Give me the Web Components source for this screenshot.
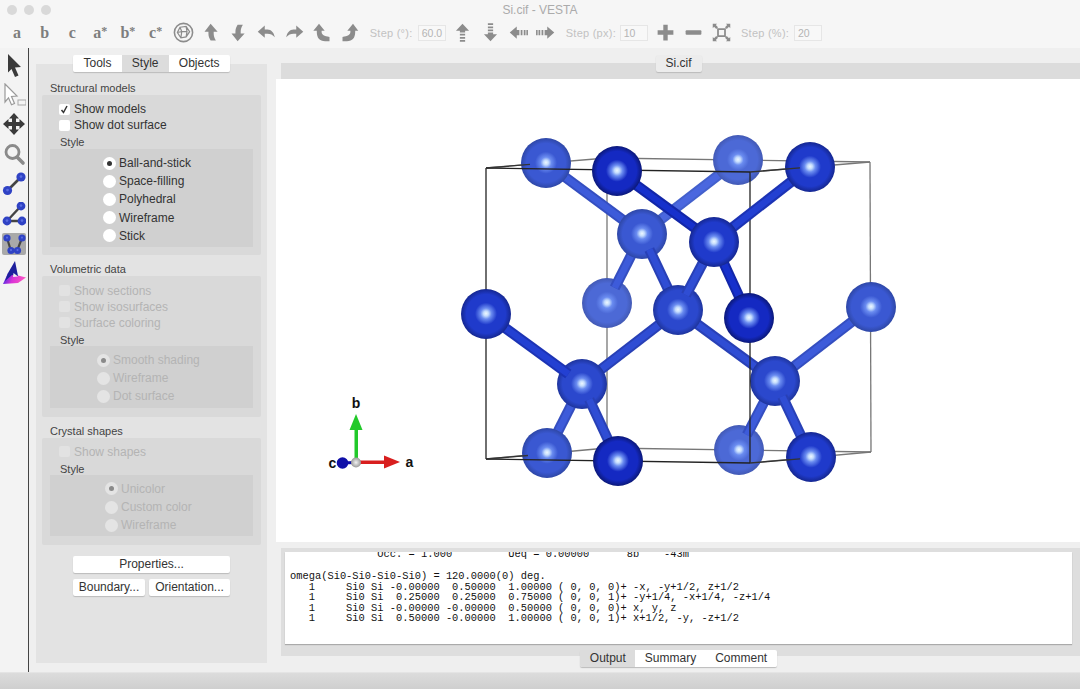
<!DOCTYPE html>
<html>
<head>
<meta charset="utf-8">
<title>Si.cif - VESTA</title>
<style>
  html, body { margin: 0; height: 689px; overflow: hidden; background: #efefef; font-family: "Liberation Sans", Arial, sans-serif; }
</style>
</head>
<body>
<vesta-app>
  <vesta-toolbar slot="top" title-text="Si.cif - VESTA"></vesta-toolbar>
  <vesta-toolstrip slot="strip"></vesta-toolstrip>

  <vesta-sidepanel slot="side">
    <vesta-tabs selected="1"><span>Tools</span><span>Style</span><span>Objects</span></vesta-tabs>

    <vesta-group label="Structural models" style="--pad:6px 8px 8px;--gap:9px;--st:16px">
      <vesta-check checked>Show models</vesta-check>
      <vesta-check>Show dot surface</vesta-check>
      <vesta-substyle style="--indent:53px">
        <vesta-radio checked>Ball-and-stick</vesta-radio>
        <vesta-radio>Space-filling</vesta-radio>
        <vesta-radio>Polyhedral</vesta-radio>
        <vesta-radio>Wireframe</vesta-radio>
        <vesta-radio>Stick</vesta-radio>
      </vesta-substyle>
    </vesta-group>

    <vesta-group label="Volumetric data" style="--pad:7px 8px 9.400px">
      <vesta-check disabled>Show sections</vesta-check>
      <vesta-check disabled>Show isosurfaces</vesta-check>
      <vesta-check disabled>Surface coloring</vesta-check>
      <vesta-substyle style="--indent:47px">
        <vesta-radio checked disabled>Smooth shading</vesta-radio>
        <vesta-radio disabled>Wireframe</vesta-radio>
        <vesta-radio disabled>Dot surface</vesta-radio>
      </vesta-substyle>
    </vesta-group>

    <vesta-group label="Crystal shapes" style="--pad:6px 8px 8.400px">
      <vesta-check disabled>Show shapes</vesta-check>
      <vesta-substyle style="--indent:55px">
        <vesta-radio checked disabled>Unicolor</vesta-radio>
        <vesta-radio disabled>Custom color</vesta-radio>
        <vesta-radio disabled>Wireframe</vesta-radio>
      </vesta-substyle>
    </vesta-group>

    <vesta-actions>
      <vesta-button style="grid-column: 1 / 3">Properties...</vesta-button>
      <vesta-button>Boundary...</vesta-button>
      <vesta-button>Orientation...</vesta-button>
    </vesta-actions>
  </vesta-sidepanel>

  <vesta-docstrip slot="main"><vesta-button>Si.cif</vesta-button></vesta-docstrip>
  <crystal-view slot="main"></crystal-view>
  <output-log slot="main">
    <vesta-tabs slot="tabs" selected="0"><span>Output</span><span>Summary</span><span>Comment</span></vesta-tabs>
  </output-log>
</vesta-app>

<script>
// little helper so every element below reads the same
function shadow(el, html) {
  el.attachShadow({ mode: 'open' });
  el.shadowRoot.innerHTML = html;
}

// balls of the measuring tools in the left strip
const iconBall = (x, y, r) => `<circle cx="${x}" cy="${y}" r="${r}" fill="#2f42c4"/><circle cx="${x}" cy="${y - .4}" r="${r * .3}" fill="#5a6ce0"/>`;

// icons of the top toolbar and the left strip, on a 24 box
const ICONS = {
  poly: '<g fill="none" stroke="currentColor"><circle cx="12" cy="12" r="10.400" stroke-width="1.800"/><path stroke-width="1.400" d="M8 6l7-1 4 6-4 6-6 1-4-6zM8 6l2 5-5 1M10 11l6 0M15 5l1 6-1 6M10 11l-1 7"/></g>',
  up: '<path fill="currentColor" d="M11 2l8 9h-4.500v2c0 3 .8 5 2.500 8h-6c-1.600-2.500-2.500-5-2.500-8v-2H4z"/>',
  down: '<path fill="currentColor" d="M11 22l8-9h-4.500v-2c0-3 .8-5 2.500-8h-6C9.400 5.500 8.500 8 8.500 11v2H4z"/>',
  left: '<path fill="currentColor" d="M2 11l8-7v4.500h3c4.500 0 7.500 3.500 8.500 9-2.500-2.700-5-4-8.500-4h-3V18z"/>',
  right: '<path fill="currentColor" d="M22 11l-8-7v4.500h-3c-4.500 0-7.500 3.500-8.500 9 2.500-2.700 5-4 8.500-4h3V18z"/>',
  turnl: '<path fill="currentColor" d="M8 2l6.500 8H11v1.500c0 3 3 5 9 5.500v5h-5c-6.500 0-9.500-4-9.500-10.500V10H1.500z"/>',
  turnr: '<path fill="currentColor" d="M16 2L9.500 10H13v1.500c0 3-3 5-9 5.500v5h5c6.500 0 9.500-4 9.500-10.500V10h3.500z"/>',
  stepup: '<path fill="currentColor" d="M12 2l7.500 8H15v2H9v-2H4.500zM9 13.500h6V15.500H9zM9 17h6v2H9zM9 20.500h6v2H9z"/>',
  stepdown: '<path fill="currentColor" d="M12 22l7.500-8H15v-2H9v2H4.500zM9 10.500h6V8.500H9zM9 7h6V5H9zM9 3.500h6v-2H9z"/>',
  stepleft: '<path fill="currentColor" d="M2 12l8-7v4h3v6h-3v4zM14.500 9h2v6h-2zM18 9h2v6h-2zM21 9h1.800v6H21z"/>',
  stepright: '<path fill="currentColor" d="M22 12l-8-7v4h-3v6h3v4zM9.500 9h-2v6h2zM6 9H4v6h2zM3 9H1.200v6H3z"/>',
  plus: '<path fill="currentColor" d="M9.500 3h5v6.500H21v5h-6.500V21h-5v-6.500H3v-5h6.500z"/>',
  minus: '<rect fill="currentColor" x="3" y="9.500" width="18" height="5" rx="1"/>',
  fit: '<g fill="currentColor"><path d="M7 7h10v10H7zM9 9v6h6V9z" fill-rule="evenodd"/><path d="M2 2h5L5.500 3.500 8 6 6 8 3.500 5.500 2 7zM22 2v5l-1.500-1.500L18 8l-2-2 2.500-2.500L17 2zM2 22v-5l1.500 1.500L6 16l2 2-2.500 2.500L7 22zM22 22h-5l1.500-1.500L16 18l2-2 2.500 2.500L22 17z"/></g>',
  arrow: '<path fill="#3a3a3a" d="M6 1l13 13-6 .5 3.500 8-3.500 1.500-3.500-8L6 19.500z"/>',
  select: '<path fill="#fff" stroke="#9a9a9a" stroke-width="1.200" d="M3 1l12 12-5.500.5 3 7-3 1.300-3-7L3 19z"/><rect x="16" y="17" width="8" height="5" fill="#f4f4f4" stroke="#a8a8a8"/>',
  move: '<path fill="#3a3a3a" d="M12 1l5 5.500h-3v3.500h3.500V7l5.500 5-5.500 5v-3H14v3.500h3L12 23l-5-5.500h3V14H6.500v3L1 12l5.500-5v3H10V6.500H7z"/>',
  zoom: '<g fill="none" stroke="#8a8a8a"><circle cx="10.500" cy="10" r="6.500" stroke-width="2.800"/><path stroke-width="3.600" stroke-linecap="round" d="M15.500 15.500l5.500 5.500"/></g>',
  bond: '<path stroke="#444" stroke-width="2.600" d="M6 18L18 6"/>' + iconBall(5.5, 18.5, 4.6) + iconBall(19, 5, 4.6),
  angle: '<path fill="none" stroke="#444" stroke-width="2.400" d="M19 4L5 19h15"/>' + iconBall(19, 4, 4.4) + iconBall(5, 19, 4.4) + iconBall(20, 19, 4.4),
  dihedral: '<rect x="0" y="1" width="24" height="22" rx="2" fill="#a9a9a9"/><path fill="none" stroke="#444" stroke-width="2.200" d="M5 6l4 13h6l5-13"/>' + iconBall(5, 6, 3.6) + iconBall(9, 18.500, 3.6) + iconBall(15.500, 18.500, 3.6) + iconBall(20, 6, 3.6),
  surface: '<defs><linearGradient id="sf" x1="0" x2="1" y1=".3" y2=".5"><stop offset="0" stop-color="#3a2ae0"/><stop offset=".45" stop-color="#d832d8"/><stop offset="1" stop-color="#ff58c0"/></linearGradient></defs><path fill="url(#sf)" d="M1 23l5-11 18 4.500-8 5.500z"/><path fill="#1d1f9c" d="M13 0L6 12 3 20l7-6 6 1z"/><path fill="#eee" d="M11.500 12l4.500 3.500-5 .5z"/>'
};

class VestaIcon extends HTMLElement {
  connectedCallback() {
    const size = this.getAttribute('size') || 21;
    const w = this.getAttribute('box') || '27.75px';
    shadow(this, `
      <style>
        :host { display: flex; align-items: center; justify-content: center; flex: none; width: ${w}; height: 100%; color: #8c8c8c; }
        svg { display: block; }
      </style>
      <svg width="${size}" height="${size}" viewBox="0 0 24 24">${ICONS[this.getAttribute('name')]}</svg>`);
  }
}
customElements.define('vesta-icon', VestaIcon);

class VestaApp extends HTMLElement {
  constructor() {
    super();
    shadow(this, `
      <style>
        :host { display: grid; grid-template-columns: 29px 1fr; grid-template-rows: 48px 624px 17px; width: 1080px; height: 689px; }
        .top { grid-column: 1 / 3; }
        .body { display: grid; grid-template-columns: 240px 1fr; min-width: 0; background: #efefef; }
        .main { display: flex; flex-direction: column; padding-left: 7px; min-width: 0; }
        .foot { grid-column: 1 / 3; border-top: 1px solid #e4e4e4; background: linear-gradient(#dcdcdc, #cfcfcf); box-sizing: border-box; }
      </style>
      <div class="top"><slot name="top"></slot></div>
      <slot name="strip"></slot>
      <div class="body">
        <slot name="side"></slot>
        <div class="main"><slot name="main"></slot></div>
      </div>
      <div class="foot"></div>`);
  }
}
customElements.define('vesta-app', VestaApp);

class VestaToolbar extends HTMLElement {
  connectedCallback() {
    const letters = [['a', ''], ['b', ''], ['c', ''], ['a', '*'], ['b', '*'], ['c', '*']];
    const icons = names => names.map(n => `<vesta-icon name="${n}"></vesta-icon>`).join('');
    shadow(this, `
      <style>
        :host { display: block; height: 48px; background: #f6f6f6; color: #bdbdbd; font: 11px "Liberation Sans", Arial, sans-serif; }
        .title { position: relative; height: 20px; line-height: 20px; text-align: center; font-size: 12px; color: #ababab; }
        .lights { position: absolute; left: 7px; top: 5px; display: flex; gap: 7px; }
        .lights i { width: 10px; height: 10px; border-radius: 50%; background: #d9d9d9; }
        .row { display: flex; align-items: center; height: 25px; padding-left: 3px; }
        .ltr { flex: none; width: 27.75px; text-align: center; font: bold 16px "Liberation Serif", "Times New Roman", serif; color: #7e7e7e; }
        .ltr sup { font-size: 12px; line-height: 0; vertical-align: 3px; }
        .lbl { flex: none; color: #c2c2c2; letter-spacing: .25px; }
        .inp { flex: none; box-sizing: border-box; width: 28px; height: 16px; line-height: 14px; border: 1px solid #e6e6e6; background: #f8f8f8; color: #b4b4b4; padding-left: 3px; font-size: 10.5px; }
      </style>
      <div class="title"><div class="lights"><i></i><i></i><i></i></div>${this.getAttribute('title-text')}</div>
      <div class="row">
        ${letters.map(([l, s]) => `<span class="ltr">${l}${s ? `<sup>${s}</sup>` : ''}</span>`).join('')}
        ${icons(['poly', 'up', 'down', 'left', 'right', 'turnl', 'turnr'])}
        <span class="lbl" style="margin-left:6px;width:48px">Step (°):</span>
        <span class="inp">60.0</span>
        <span style="width:3px"></span>
        ${icons(['stepup', 'stepdown', 'stepleft', 'stepright'])}
        <span class="lbl" style="margin-left:6px;width:54px">Step (px):</span>
        <span class="inp">10</span>
        <span style="width:4px"></span>
        ${icons(['plus', 'minus', 'fit'])}
        <span class="lbl" style="margin-left:6px;width:53px">Step (%):</span>
        <span class="inp">20</span>
      </div>`);
  }
}
customElements.define('vesta-toolbar', VestaToolbar);

class VestaToolstrip extends HTMLElement {
  connectedCallback() {
    const names = ['arrow', 'select', 'move', 'zoom', 'bond', 'angle', 'dihedral', 'surface'];
    shadow(this, `
      <style>
        :host { display: flex; flex-direction: column; box-sizing: border-box; width: 29px; height: 624px; padding-top: 2px; background: #f3f3f3; border-right: 1px solid #444; }
        div { height: 29.800px; flex: none; }
      </style>
      ${names.map(n => `<div><vesta-icon name="${n}" size="24" box="28px"></vesta-icon></div>`).join('')}`);
  }
}
customElements.define('vesta-toolstrip', VestaToolstrip);

class VestaSidepanel extends HTMLElement {
  constructor() {
    super();
    shadow(this, `
      <style>
        :host { display: flex; flex-direction: column; box-sizing: border-box; width: 231px; height: 599px; margin: 16px 0 0 7px; padding: 0 6px; background: #e3e3e3; }
      </style>
      <slot></slot>`);
  }
}
customElements.define('vesta-sidepanel', VestaSidepanel);

class VestaTabs extends HTMLElement {
  connectedCallback() {
    const sel = Number(this.getAttribute('selected'));
    [...this.children].forEach((c, i) => c.setAttribute('style',
      `padding:0 ${this.closest('output-log') ? 9.5 : 10.17}px;line-height:17px;background:${i === sel ? '#dcdcdc' : '#fff'};`));
    shadow(this, `
      <style>
        :host { display: flex; align-self: center; margin: -9px 0 0; height: 17px; border-radius: 2px; overflow: hidden; box-shadow: 0 1px 1px #bbb; font: 12px "Liberation Sans", Arial, sans-serif; color: #333; white-space: nowrap; }
      </style>
      <slot></slot>`);
  }
}
customElements.define('vesta-tabs', VestaTabs);

class VestaGroup extends HTMLElement {
  connectedCallback() {
    shadow(this, `
      <style>
        :host { display: block; margin-top: var(--gap, 7px); font: 12px "Liberation Sans", Arial, sans-serif; color: #333; }
        .t { height: 14px; line-height: 14px; padding-left: 8px; font-size: 11px; color: #444; }
        .b { background: #d9d9d9; padding: var(--pad); border-radius: 2px; }
      </style>
      <div class="t">${this.getAttribute('label')}</div>
      <div class="b"><slot></slot></div>`);
  }
}
customElements.define('vesta-group', VestaGroup);

class VestaSubstyle extends HTMLElement {
  constructor() {
    super();
    shadow(this, `
      <style>
        :host { display: block; }
        .t { height: var(--st, 15px); line-height: 18px; padding-left: 10px; font-size: 11px; color: #444; }
        .b { background: #d0d0d0; padding: 5px 0 2px var(--indent); }
      </style>
      <div class="t">Style</div>
      <div class="b"><slot></slot></div>`);
  }
}
customElements.define('vesta-substyle', VestaSubstyle);

class VestaCheck extends HTMLElement {
  connectedCallback() {
    const on = this.hasAttribute('checked');
    const off = this.hasAttribute('disabled');
    shadow(this, `
      <style>
        :host { display: flex; align-items: center; height: 16px; padding-left: 9px; color: ${off ? '#b4b4b4' : '#333'}; white-space: nowrap; }
        .box { flex: none; width: 11px; height: 11px; margin-right: 4px; background: ${off ? '#e2e2e2' : '#fff'}; border-radius: 2px; display: flex; }
      </style>
      <span class="box">${on ? '<svg width="11" height="11" viewBox="0 0 11 11"><path d="M2.500 6l2 2.500L8 2" fill="none" stroke="#333" stroke-width="1.500"/></svg>' : ''}</span>
      <slot></slot>`);
  }
}
customElements.define('vesta-check', VestaCheck);

class VestaRadio extends HTMLElement {
  connectedCallback() {
    const on = this.hasAttribute('checked');
    const off = this.hasAttribute('disabled');
    shadow(this, `
      <style>
        :host { display: flex; align-items: center; height: 18.200px; color: ${off ? '#b4b4b4' : '#333'}; white-space: nowrap; }
        .dot { flex: none; width: 13px; height: 13px; margin-right: 3px; border-radius: 50%; background: ${off ? '#e4e4e4' : '#fff'}; display: flex; align-items: center; justify-content: center; }
        .dot i { width: 5px; height: 5px; border-radius: 50%; background: ${off ? '#8a8a8a' : '#333'}; }
      </style>
      <span class="dot">${on ? '<i></i>' : ''}</span>
      <slot></slot>`);
  }
}
customElements.define('vesta-radio', VestaRadio);

class VestaButton extends HTMLElement {
  constructor() {
    super();
    shadow(this, `
      <style>
        :host { display: block; height: 17px; line-height: 17px; text-align: center; background: #fff; border-radius: 2px; box-shadow: 0 1px 1px #bbb; color: #333; font: 12px/17px "Liberation Sans", Arial, sans-serif; white-space: nowrap; }
      </style>
      <slot></slot>`);
  }
}
customElements.define('vesta-button', VestaButton);

class VestaActions extends HTMLElement {
  constructor() {
    super();
    shadow(this, `
      <style>
        :host { display: grid; grid-template-columns: 72px 81px; gap: 6px 4px; justify-content: center; margin-top: 11px; }
      </style>
      <slot></slot>`);
  }
}
customElements.define('vesta-actions', VestaActions);

class VestaDocstrip extends HTMLElement {
  constructor() {
    super();
    shadow(this, `
      <style>
        :host { display: flex; justify-content: center; box-sizing: border-box; height: 16px; margin: 15px 0 0 5px; background: #dcdcdc; }
        div { width: 46px; margin: -8px 0 0 -4px; }
        ::slotted(vesta-button) { background: #ececec; }
      </style>
      <div><slot></slot></div>`);
  }
}
customElements.define('vesta-docstrip', VestaDocstrip);

class CrystalView extends HTMLElement {
  connectedCallback() {
    // depth 4 is farthest, 0 is nearest; coordinates are the ones of the window
    const tones = [
      { base: '#1429c2', edge: '#0b1878', bond: '#1630cc', side: '#1226a8' },
      { base: '#1f3acb', edge: '#152790', bond: '#2340d2', side: '#1c33b4' },
      { base: '#2b48cd', edge: '#1e349c', bond: '#2f4dd4', side: '#2840b6' },
      { base: '#3a58d2', edge: '#2e47a6', bond: '#3d5bda', side: '#344ec0' },
      { base: '#4c69d6', edge: '#4259b4', bond: '#4a67df', side: '#4360cc' }
    ];
    const balls = [
      [738, 160, 4], [607, 303, 4], [739, 450, 4],
      [546, 163, 3], [642, 234, 3], [871, 307, 3], [547, 453, 3],
      [678, 310, 2], [582, 384, 2], [775, 381, 2],
      [810, 167, 1], [714, 242, 1], [486, 314, 1], [811, 457, 1],
      [617, 171, 0], [749, 318, 0], [618, 461, 0]
    ];
    // x1, y1, x2, y2, when it is drawn, and the tone when that is darker
    const bonds = [
      [738, 160, 642, 234, 4],
      [546, 163, 642, 234, 3], [642, 234, 607, 303, 3], [871, 307, 775, 381, 3], [775, 381, 739, 450, 3], [582, 384, 547, 453, 3],
      [642, 234, 678, 310, 2], [678, 310, 582, 384, 2], [678, 310, 775, 381, 2],
      [617, 171, 714, 242, 1, 0], [810, 167, 714, 242, 1], [714, 242, 678, 310, 1, 2], [714, 242, 749, 318, 1, 0],
      [486, 314, 582, 384, 1], [582, 384, 618, 461, 1, 2], [775, 381, 811, 457, 1, 2]
    ];
    const line = (x1, y1, x2, y2, c) => `<line x1="${x1}" y1="${y1}" x2="${x2}" y2="${y2}" stroke="${c}" stroke-width="1.300"/>`;
    // stop a bond inside the ball, so it only shows a short stub on the far one
    const bondLine = ([x1, y1, x2, y2, d, tone]) => {
      const t = tones[tone === undefined ? d : tone];
      const len = Math.hypot(x2 - x1, y2 - y1);
      const ux = (x2 - x1) / len * 17, uy = (y2 - y1) / len * 17;
      const ends = `x1="${(x1 + ux).toFixed(1)}" y1="${(y1 + uy).toFixed(1)}" x2="${(x2 - ux).toFixed(1)}" y2="${(y2 - uy).toFixed(1)}"`;
      return `<line ${ends} stroke="${t.side}" stroke-width="10.500"/><line ${ends} stroke="${t.bond}" stroke-width="6.500"/>`;
    };
    const grads = tones.map((t, i) => `
      <radialGradient id="s${i}" cx=".5" cy=".5" r=".5" fx=".5" fy=".49">
        <stop offset="0" stop-color="#eef8ff"/>
        <stop offset=".1" stop-color="#c4dcfd"/>
        <stop offset=".22" stop-color="#6a8cf0"/>
        <stop offset=".44" stop-color="${t.base}"/>
        <stop offset=".78" stop-color="${t.base}"/>
        <stop offset="1" stop-color="${t.edge}"/>
      </radialGradient>`).join('');

    let art = '';
    // far side of the cell
    art += line(607, 158, 870, 162, '#777') + line(607, 448, 871, 452, '#777')
      + line(607, 158, 607, 448, '#777') + line(870, 162, 871, 452, '#777')
      + line(486, 168, 607, 158, '#777') + line(750, 172, 870, 162, '#777')
      + line(486, 459, 607, 448, '#777') + line(750, 463, 871, 452, '#777');
    for (let d = 4; d >= 0; d--) {
      if (d === 1) {
        // near side of the cell goes here
        art += line(486, 168, 750, 172, '#222') + line(486, 459, 750, 463, '#222')
          + line(486, 168, 486, 459, '#222') + line(750, 172, 750, 463, '#222');
      }
      art += bonds.filter(b => b[4] === d).map(bondLine).join('');
      art += balls.filter(b => b[2] === d).map(b =>
        `<circle cx="${b[0]}" cy="${b[1]}" r="25" fill="url(#s${d})"/>`).join('');
    }
    art += line(486, 168, 530, 164.400, '#333') + line(750, 172, 800, 167.800, '#333')
      + line(486, 459, 528, 455.500, '#333') + line(750, 463, 800, 458.800, '#333');

    shadow(this, `
      <style>
        :host { display: block; height: 463px; background: #fff; }
        svg { display: block; }
        text { font: bold 14px "Liberation Sans", Arial, sans-serif; fill: #111; text-anchor: middle; }
      </style>
      <svg width="804" height="463" viewBox="276 79 804 463">
        <defs>${grads}
          <radialGradient id="org"><stop offset="0" stop-color="#f2f2f2"/><stop offset="1" stop-color="#9a9a9a"/></radialGradient>
        </defs>
        ${art}
        <rect x="354.500" y="428" width="3.500" height="34" fill="#22c92a"/>
        <path d="M356 414l6.500 16h-13z" fill="#22c92a"/>
        <rect x="356" y="460.500" width="28" height="3.500" fill="#d81e1e"/>
        <path d="M400 462l-16 6.500v-13z" fill="#d81e1e"/>
        <line x1="342" y1="463" x2="355" y2="462.500" stroke="#1010a8" stroke-width="3"/>
        <circle cx="342.500" cy="463" r="5.800" fill="#0f0fa8"/>
        <circle cx="356" cy="462.500" r="5" fill="url(#org)"/>
        <text x="356" y="408">b</text>
        <text x="332.500" y="468">c</text>
        <text x="409.500" y="467">a</text>
      </svg>`);
  }
}
customElements.define('crystal-view', CrystalView);

class OutputLog extends HTMLElement {
  connectedCallback() {
    // the log is scrolled, so its first line is cut by the top of the paper
    const first = '              Occ. = 1.000         Ueq = 0.00000      8b    -43m';
    const text = [
      'omega(Si0-Si0-Si0-Si0) = 120.0000(0) deg.',
      '   1     Si0 Si -0.00000  0.50000  1.00000 ( 0, 0, 0)+ -x, -y+1/2, z+1/2',
      '   1     Si0 Si  0.25000  0.25000  0.75000 ( 0, 0, 1)+ -y+1/4, -x+1/4, -z+1/4',
      '   1     Si0 Si -0.00000 -0.00000  0.50000 ( 0, 0, 0)+ x, y, z',
      '   1     Si0 Si  0.50000 -0.00000  1.00000 ( 0, 0, 1)+ x+1/2, -y, -z+1/2'
    ].join('\n');
    shadow(this, `
      <style>
        :host { display: block; box-sizing: border-box; height: 108px; margin: 6px 0 0 5px; padding: 4px 8px 0 4px; background: #dedede; }
        .paper { height: 92px; background: #fff; overflow: hidden; box-shadow: 0 1px 1px #aaa; }
        pre { margin: 0; padding-left: 5px; font: 10.400px/10.400px "Liberation Mono", "Courier New", monospace; color: #111; }
        .cut { margin-top: -3px; }
        .log { margin-top: 12px; }
        .tabs { display: flex; justify-content: center; padding-top: 15px; }
      </style>
      <div class="paper"><pre class="cut">${first}</pre><pre class="log">${text}</pre></div>
      <div class="tabs"><slot name="tabs"></slot></div>`);
  }
}
customElements.define('output-log', OutputLog);
</script>
</body>
</html>
